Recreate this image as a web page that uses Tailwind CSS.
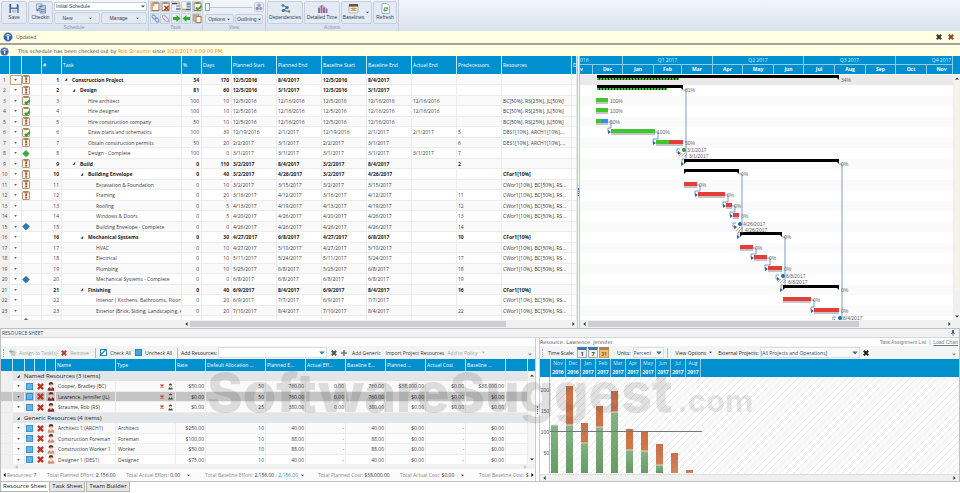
<!DOCTYPE html>
<html lang="en">
<head>
<meta charset="UTF-8">
<meta name="viewport" content="width=device-width, initial-scale=1.0">
<title>Construction Project - Schedule</title>
<script src="https://cdn.jsdelivr.net/npm/@tailwindcss/browser@4"></script>
</head>
<body class="h-screen flex flex-col overflow-hidden bg-white text-[#404040] text-[5px] leading-[8px] font-['Open_Sans',sans-serif]">

<!-- shared icons -->
<svg class="hidden">
<symbol id="i-clip" viewBox="0 0 8 9"><rect x=".5" y=".7" width="7" height="7.8" rx=".6" fill="#fbf3ea" stroke="#a98a6e" stroke-width=".9"/><rect x="1.6" y=".2" width="4.8" height="1.700" fill="#8c8a3c"/><path d="M3.100 2.600h2l-.4 2.800H3.500z" fill="#d8261c"/><circle cx="4.100" cy="6.700" r=".9" fill="#d8261c"/></symbol>
<symbol id="i-done" viewBox="0 0 8 9"><rect x=".5" y=".7" width="7" height="7.8" rx=".6" fill="#fbf7ee" stroke="#a98a6e" stroke-width=".9"/><rect x="1.600" y=".2" width="4.800" height="1.700" fill="#8c8a3c"/><path d="M2.800 6l1.600 1.500L7.700 4.200" fill="none" stroke="#2f9e2f" stroke-width="2"/></symbol>
<symbol id="i-ms-green" viewBox="0 0 8 9"><path d="M4 1.400L7.200 4.600 4 7.800.8 4.600z" fill="#35b035" stroke="#1f8f28" stroke-width=".6"/></symbol>
<symbol id="i-ms-blue" viewBox="0 0 8 9"><path d="M4 1.400L7.200 4.600 4 7.800.8 4.600z" fill="#1883c4" stroke="#34407c" stroke-width=".8"/></symbol>
<symbol id="i-info" viewBox="0 0 10 10"><circle cx="5" cy="5" r="4.300" fill="#2b5fae" stroke="#8197ba" stroke-width=".7"/><path d="M1.600 4a3.600 3 0 0 1 6.800 0q-3.400 1.600-6.800 0z" fill="#7ba4dd"/><rect x="4.300" y="4.200" width="1.500" height="3.600" fill="#fff"/><rect x="4.300" y="2" width="1.500" height="1.400" fill="#fff"/></symbol>
<symbol id="i-x" viewBox="0 0 6 6"><path d="M.8.8l4.400 4.400M5.200.8L.8 5.200" stroke="currentColor" stroke-width="2"/></symbol>
<symbol id="i-user" viewBox="0 0 8 10"><circle cx="4" cy="3" r="2.200" fill="#f0c8a4"/><path d="M1.500 3.200Q1.200 0 4 0t2.500 3.200Q5.200 1.900 1.500 3.200z" fill="#5a3526"/><path d="M.3 9.600Q.2 5.600 4 5.600t3.700 4z" fill="currentColor"/><path d="M3 5.600L4 8.400l1-2.800z" fill="#fff"/></symbol>
<symbol id="i-down" viewBox="0 0 4 3"><path d="M0 .4h4L2 2.600z" fill="currentColor"/></symbol>
<symbol id="i-left" viewBox="0 0 3 4"><path d="M2.600 0v4L.4 2z" fill="currentColor"/></symbol>
<symbol id="i-right" viewBox="0 0 3 4"><path d="M.4 0v4l2.200-2z" fill="currentColor"/></symbol>
<symbol id="i-up" viewBox="0 0 4 3"><path d="M0 2.600h4L2 .4z" fill="currentColor"/></symbol>
<symbol id="i-tree" viewBox="0 0 4 4"><path d="M3.600 0v3.600H0z" fill="currentColor"/></symbol>
</svg>

<!-- ribbon -->
<header class="flex h-[31px] shrink-0 bg-linear-to-b from-[#f3f6fb] to-[#d8e2ee] font-['Liberation_Sans',sans-serif] leading-[6px] text-[#34445c]">
<section class="flex flex-col border-r border-[#c4cedc] pl-px pr-px w-[149px]">
<div class="flex h-6 gap-px pt-px">
<button class="flex w-[26px] flex-col items-center justify-between rounded-xs border border-[#c3cfdf] bg-[#e3eaf4] pb-[3px] pt-px">
<svg class="size-3" viewBox="0 0 12 12"><path d="M1 1h9l1 1v9H1z" fill="#3f6496"/><rect x="3" y="1" width="6" height="4" fill="#eef3fa"/><rect x="2.600" y="6.400" width="7" height="4.600" fill="#dfe8f4"/><path d="M4 8h4M4 9.500h4" stroke="#7f97b8" stroke-width=".7"/></svg>
Save</button>
<button class="flex w-[25px] flex-col items-center justify-between rounded-xs border border-[#c3cfdf] bg-[#e3eaf4] pb-[3px] pt-px">
<svg class="size-3" viewBox="0 0 12 12"><rect x="1" y="1" width="6" height="7" fill="#dfe6ef" stroke="#7d8fa9" stroke-width=".8"/><rect x="5" y="3" width="6" height="8" fill="#c5d2e3" stroke="#5f7698" stroke-width=".8"/><path d="M3 4h5M6 7h4M6 9h4" stroke="#50698f" stroke-width=".8"/><path d="M2 9q0-3 3-3" fill="none" stroke="#3b78b8" stroke-width="1.200"/></svg>
Checkin</button>
<div class="flex flex-1 flex-col gap-px">
<div class="relative mt-px">
<select aria-label="Schedule" class="block h-[9px] w-full appearance-none border border-[#c3cfdf] bg-white pl-px text-[5px] leading-[7px]"><option>Initial Schedule</option></select>
<svg class="pointer-events-none absolute right-[2px] top-[3px] h-[3px] w-1"><use href="#i-down"/></svg>
</div>
<div class="flex flex-1 gap-px">
<button class="flex flex-1 items-center justify-center gap-4 rounded-xs border border-[#c3cfdf] bg-[#e3eaf4]">New <svg class="h-[3px] w-[3px]"><use href="#i-down"/></svg></button>
<button class="flex flex-1 items-center justify-center gap-2 rounded-xs border border-[#c3cfdf] bg-[#e3eaf4]">Manage <svg class="h-[3px] w-[3px]"><use href="#i-down"/></svg></button>
</div>
</div>
</div>
<p class="text-center text-[#8a9bb3]">Schedule</p>
</section>
<section class="flex w-[54px] flex-col border-r border-[#c4cedc] px-px">
<div class="grid h-6 grid-cols-5 grid-rows-2 gap-px pt-px">
<button aria-label="New task" class="grid place-items-center border border-[#c3cfdf]"><svg class="size-[9px]" viewBox="0 0 9 9"><rect x="1" y="1" width="7" height="7.500" fill="#fdf6e8" stroke="#a07c50"/><rect x="2.500" y="0" width="4" height="2" fill="#9a8f80"/><path d="M0 3l1.500-.5L2 1l.7 1.500L4 3l-1.300.7L2 5l-.6-1.300z" fill="#f08a24"/></svg></button>
<button aria-label="Delete task" class="grid place-items-center border border-[#c3cfdf]"><svg class="size-[9px]" viewBox="0 0 9 9"><rect x="1" y="1" width="7" height="7.500" fill="#fdf6e8" stroke="#a07c50"/><rect x="2.500" y="0" width="4" height="2" fill="#9a8f80"/><path d="M3.500 4l4 4M7.500 4l-4 4" stroke="#b5352a" stroke-width="1.600"/></svg></button>
<button aria-label="Outdent" class="grid place-items-center border border-[#c3cfdf]"><svg class="size-[9px]" viewBox="0 0 9 9"><path d="M0 1.500h5" stroke="#4a4a5a" stroke-width="1.500"/><path d="M5 1.500h3" stroke="#e88a3c" stroke-width="1.500"/><rect x="4" y="3" width="4.500" height="2" fill="#aab6c4"/><rect x="4" y="6" width="4.500" height="2" fill="#8292a6"/></svg></button>
<button aria-label="Indent" class="grid place-items-center border border-[#c3cfdf]"><svg class="size-[9px]" viewBox="0 0 9 9"><path d="M4.500.5h4v2.500h-4zM4.500 3.500h4v2h-4z" fill="#8292a6"/><path d="M0 7.500h4" stroke="#e88a3c" stroke-width="1.500"/><path d="M4 7.500h4.500" stroke="#4a5a78" stroke-width="1.500"/></svg></button>
<button aria-label="Complete" class="grid place-items-center border border-[#c3cfdf]"><svg class="size-[9px]" viewBox="0 0 9 9"><rect x="1" y="1" width="7" height="7.500" fill="#fdf6e8" stroke="#a07c50"/><rect x="2.500" y="0" width="4" height="2" fill="#6b8f3c"/><path d="M3 5.500l2 2L8.500 4" fill="none" stroke="#3aa336" stroke-width="1.900"/></svg></button>
<button aria-label="Link" class="grid place-items-center border border-[#c3cfdf]"><svg class="size-[9px]" viewBox="0 0 9 9" fill="none" stroke="#7b9bc8" stroke-width="1.200"><ellipse cx="3" cy="3" rx="2.300" ry="1.500" transform="rotate(45 3 3)"/><ellipse cx="6" cy="6" rx="2.300" ry="1.500" transform="rotate(45 6 6)"/></svg></button>
<button aria-label="Unlink" class="grid place-items-center border border-[#c3cfdf]"><svg class="size-[9px]" viewBox="0 0 9 9" fill="none" stroke="#b39ac8" stroke-width="1"><ellipse cx="4.500" cy="4.500" rx="4" ry="1.700" transform="rotate(45 4.500 4.500)"/></svg></button>
<button aria-label="Move right" class="grid place-items-center border border-[#c3cfdf]"><svg class="size-[9px]" viewBox="0 0 9 9"><path d="M1 3h3.500V1l4 3.500-4 3.500V6H1z" fill="#3aa336"/></svg></button>
<button aria-label="Move left" class="grid place-items-center border border-[#c3cfdf]"><svg class="size-[9px]" viewBox="0 0 9 9"><path d="M8 3H4.500V1l-4 3.500 4 3.500V6H8z" fill="#3aa336"/></svg></button>
<button aria-label="Paste" class="grid place-items-center border border-[#c3cfdf]"><svg class="size-[9px]" viewBox="0 0 9 9"><rect x=".8" y="1" width="5" height="6" fill="#e8d6b4" stroke="#a07c50"/><rect x="3" y="2.500" width="5" height="6" fill="#fdf6e8" stroke="#a07c50"/></svg></button>
</div>
<p class="text-center text-[#8a9bb3]">Task</p>
</section>
<section class="flex w-[63px] flex-col border-r border-[#c4cedc] px-[2px]">
<div class="flex h-6 flex-col gap-px pt-px">
<div class="flex h-3 items-center gap-[2px]">
<input type="range" value="0" aria-label="Zoom" class="h-[9px] w-[47px] appearance-none bg-linear-to-b from-transparent from-40% via-[#bcc6d4] via-50% to-transparent to-60% [&::-webkit-slider-thumb]:h-[8px] [&::-webkit-slider-thumb]:w-[5px] [&::-webkit-slider-thumb]:appearance-none [&::-webkit-slider-thumb]:border [&::-webkit-slider-thumb]:border-[#9aa7b8] [&::-webkit-slider-thumb]:bg-white">
<button aria-label="Find" class="rounded-xs border border-[#c3cfdf] bg-[#e3eaf4]"><svg class="size-2" viewBox="0 0 8 8"><circle cx="4" cy="2.300" r="1.800" fill="#9aa6b8"/><circle cx="2.200" cy="5.500" r="1.700" fill="#8393ac"/><circle cx="5.800" cy="5.500" r="1.700" fill="#a59ab8"/></svg></button>
</div>
<div class="flex flex-1 gap-px">
<button class="flex flex-1 items-center justify-center gap-[2px] rounded-xs border border-[#c3cfdf] bg-[#e3eaf4]">Options <svg class="h-[3px] w-[3px]"><use href="#i-down"/></svg></button>
<button class="flex flex-1 items-center justify-center gap-px rounded-xs border border-[#c3cfdf] bg-[#e3eaf4]">Outlining <svg class="h-[3px] w-[3px]"><use href="#i-down"/></svg></button>
</div>
</div>
<p class="text-center text-[#8a9bb3]">View</p>
</section>
<section class="flex w-[133px] flex-col border-r border-[#c4cedc] px-px">
<div class="flex h-6 gap-px pt-px">
<button class="flex w-9 flex-col items-center justify-between rounded-xs border border-[#c3cfdf] bg-[#e3eaf4] pb-[3px] pt-px">
<svg class="size-[11px]" viewBox="0 0 11 11"><circle cx="3" cy="2.500" r="1.400" fill="#5a9a3e"/><path d="M3.500 2.500L7 4.500 3.500 7.500 9 8.500" fill="none" stroke="#2f66a6" stroke-width="1"/><circle cx="7.200" cy="4.400" r="1.500" fill="#3d6fae"/><circle cx="3.200" cy="7.500" r="1.500" fill="#3d6fae"/><circle cx="9" cy="8.500" r="1.300" fill="#5a9a3e"/></svg>
Dependencies</button>
<button class="flex w-9 flex-col items-center justify-between rounded-xs border border-[#c3cfdf] bg-[#e3eaf4] pb-[3px] pt-px">
<svg class="size-[11px]" viewBox="0 0 11 11"><path d="M1 5h2v5H1z" fill="#8a6cb8"/><path d="M3.500 3h2v7h-2z" fill="#c85a7c"/><path d="M6 4.500h2V10H6z" fill="#4d86c0"/><path d="M8.500 6h2v4h-2z" fill="#b05ab0"/><path d="M1 5l4-3 5 4" fill="none" stroke="#7f6a9c" stroke-width=".7"/></svg>
Detailed Time</button>
<button class="relative flex w-[31px] flex-col items-center justify-between rounded-xs border border-[#c3cfdf] bg-[#e3eaf4] pb-[3px] pr-[6px] pt-px">
<svg class="size-[11px]" viewBox="0 0 11 11"><rect x="1" y="1.500" width="9" height="8.500" rx="1" fill="#f2efe8" stroke="#9a958c" stroke-width=".6"/><rect x="1" y="1" width="9" height="2.600" fill="#5c5750"/><path d="M2.500 5.500h6M2.500 7.500h6" stroke="#b3a488" stroke-width="1"/><rect x="4" y="4.700" width="3" height="2" fill="#e08c3a"/></svg>
Baselines<svg class="absolute right-[2px] top-[9px] h-[3px] w-[3px]"><use href="#i-down"/></svg></button>
<button class="flex w-6 flex-col items-center justify-between rounded-xs border border-[#c3cfdf] bg-[#e3eaf4] pb-[3px] pt-px">
<svg class="size-[11px]" viewBox="0 0 11 11"><path d="M2 .5h5l2.500 2.500v7.500H2z" fill="#fff" stroke="#8a96a8" stroke-width=".7"/><path d="M3.500 5.500q1-2 3.500-1l.3-1 .9 2.400-2.300.3.500-.8q-1.400-.4-2 .6zM8 6.700q-1 2.300-3.500 1.300l-.4 1-.8-2.500 2.300-.2-.4.800q1.300.5 1.900-.6z" fill="#3f9c3c"/></svg>
Refresh</button>
</div>
<p class="text-center text-[#8a9bb3]">Actions</p>
</section>
</header>

<div class="flex h-[14px] shrink-0 items-center gap-[3px] border-b-2 border-[#a3a3a3] bg-[#ffffe1] px-[3px]">
<svg class="size-[10px]"><use href="#i-info"/></svg>
<p class="flex-1 text-[#3d4c5c]">Updated</p>
<button aria-label="Close" class="text-[#333]"><svg class="size-[6px]"><use href="#i-x"/></svg></button>
<button aria-label="Dismiss" class="ml-[3px] mr-[3px] text-[#8b4a2c]"><svg class="size-[6px]"><use href="#i-x"/></svg></button>
</div>
<div class="flex h-[11px] shrink-0 items-center gap-[9px] border-t border-white bg-[#ffffe1]">
<svg class="size-[9px]"><use href="#i-info"/></svg>
<p class="font-['DejaVu_Sans',sans-serif] text-[#3d4c5c]">This schedule has been checked out by <span class="text-[#ee8434]">Rob Straume</span> since <span class="text-[#ee8434]">3/28/2017 4:09:00 PM.</span></p>
</div>

<main class="flex min-h-0 flex-1 flex-col">
<!-- schedule grid + gantt -->
<section class="grid min-h-0 flex-[272_0_0px] grid-cols-[577fr_3px_380fr]">
<div class="flex min-h-0 min-w-0 flex-col">
<div class="min-h-0 flex-1 overflow-hidden">
<table class="w-full table-fixed border-separate border-spacing-0">
<colgroup>
<col class="w-[10px]"><col class="w-3"><col class="w-5"><col class="w-5"><col class="w-[120px]"><col class="w-5"><col class="w-[30px]"><col class="w-[45px]"><col class="w-[45px]"><col class="w-[45px]"><col class="w-[45px]"><col class="w-[45px]"><col class="w-[45px]"><col class="w-[70px]"><col>
</colgroup>
<thead>
<tr id="grid-head" class="h-[19px] bg-[#0090cf] text-left text-white"></tr>
</thead>
<tbody id="grid-body"></tbody>
</table>
</div>
<div class="flex h-2 shrink-0 items-center bg-[#f0f0f0] pl-[185px] pr-[2px] text-[#333]">
<svg class="mr-[2px] h-1 w-[3px]"><use href="#i-left"/></svg>
<div class="h-[6px] w-[316px] bg-[#cdcdd2]"></div>
<svg class="ml-auto h-1 w-[3px]"><use href="#i-right"/></svg>
</div>
</div>
<div class="flex items-center justify-center border-x border-[#b9c4d6] bg-white"><div class="h-2 w-px border-l border-dotted border-[#3f5f95]"></div></div>
<div class="flex min-h-0 min-w-0 flex-col">
<div class="flex h-[18px] shrink-0 bg-[#0090cf] text-center text-[#d5edf8]">
<div class="min-w-0 flex-1 overflow-hidden border-r border-[#8fcbe8]">
<div id="quarters" class="flex h-[9px] border-b border-[#8fcbe8]"></div>
<div id="months" class="flex h-[9px] font-bold text-white"></div>
</div>
<div class="w-[7px]"></div>
</div>
<div class="flex min-h-0 flex-1 border-t border-white">
<div class="min-w-0 flex-1 overflow-hidden"><svg id="gantt" class="block h-full w-full font-['Liberation_Sans',sans-serif] text-[5px]" fill="#666"></svg></div>
<div class="flex w-[7px] flex-col items-center justify-between bg-[#f0f0f0] py-[2px] text-[#333]">
<svg class="h-[3px] w-1"><use href="#i-up"/></svg>
<div class="mb-6 w-1 flex-1 bg-[#f6f3ea]"></div>
<svg class="h-[3px] w-1"><use href="#i-down"/></svg>
</div>
</div>
<div class="flex h-2 shrink-0 items-center bg-[#f0f0f0] pl-[3px] pr-[9px] text-[#333]">
<svg class="mr-[2px] h-1 w-[3px]"><use href="#i-left"/></svg>
<div class="h-[6px] w-[271px] bg-[#cdcdd2]"></div>
<svg class="ml-auto h-1 w-[3px]"><use href="#i-right"/></svg>
</div>
</div>
</section>

<!-- resource sheet -->
<section class="relative flex min-h-0 flex-[165_0_0px] flex-col">
<div class="flex min-h-0 flex-1 flex-col border border-[#c0c0c0]">
<div class="flex h-[9px] shrink-0 items-center justify-between border-b border-[#d8d8d8] bg-[#f1f2f3] px-px pr-[3px]">
<h2 class="text-[#3c5068]">RESOURCE SHEET</h2>
<svg class="size-[6px]" viewBox="0 0 6 6"><path d="M2 0h2v3h1v.8H1V3h1zM2.700 4h.7v2h-.7z" fill="#55657c"/></svg>
</div>
<div class="grid min-h-0 flex-1 grid-cols-[534fr_5px_419fr]">
<div class="flex min-h-0 min-w-0 flex-col pt-2">
<div class="flex h-[13px] shrink-0 items-center gap-[3px] whitespace-nowrap bg-[#f3f5f5] pl-[2px] text-[#333]">
<span class="h-2 border-l border-dotted border-[#aaa]"></span>
<button class="flex items-center gap-[3px] text-[#a3a3a3]"><svg class="ml-[2px] size-[7px]" viewBox="0 0 7 7"><rect x="2" y="1.500" width="4.500" height="5.500" fill="#ccc"/><path d="M0 2h1.500V.5h1V2H4v1H2.500v1.500h-1V3H0z" fill="#7fb77f"/></svg>Assign to Task(s)</button>
<button class="ml-px flex items-center gap-[3px] text-[#a3a3a3]"><svg class="size-[6px] text-[#c23a2e]"><use href="#i-x"/></svg>Remove</button>
<span class="ml-[3px] h-[10px] border-l border-[#bbb]"></span>
<label class="ml-px flex items-center gap-[3px]"><input type="checkbox" checked class="size-[7px] appearance-none border border-[#2f7fb8] bg-[#6db3e3] checked:bg-[linear-gradient(135deg,#fff_30%,#3f97d2_30%,#3f97d2_50%,#fff_50%)]">Check All</label>
<label class="ml-px flex items-center gap-[3px]"><input type="checkbox" class="size-[7px] appearance-none border border-[#2f7fb8] bg-[#4ba3dd]">Uncheck All</label>
<span class="ml-[2px] h-[10px] border-l border-[#bbb]"></span>
<label for="add-res" class="font-medium text-[#222]">Add Resources:</label>
<div class="relative -ml-[2px]">
<select id="add-res" class="block h-[11px] w-[109px] appearance-none border border-[#ddd] bg-white"><option></option></select>
<svg class="pointer-events-none absolute right-[2px] top-1 h-[4px] w-[6px] text-[#0f80c0]"><use href="#i-down"/></svg>
</div>
<button aria-label="Clear" class="ml-px text-[#555]"><svg class="size-[6px]"><use href="#i-x"/></svg></button>
<button class="ml-px flex items-center gap-[5px]"><svg class="size-[6px]" viewBox="0 0 6 6"><path d="M2.200 0h1.600v2.200H6v1.600H3.800V6H2.200V3.800H0V2.200h2.200z" fill="#777"/></svg>Add Generic</button>
<button class="ml-[2px]">Import Project Resources</button>
<button class="flex items-center gap-1 text-[#a3a3a3]">Add to Policy <svg class="h-[3px] w-[3px]"><use href="#i-down"/></svg></button>
<svg class="ml-auto mr-[3px] mt-1 h-[3px] w-1 text-[#888]"><use href="#i-down"/></svg>
</div>
<div class="flex min-h-0 flex-1">
<div class="min-w-0 flex-1 overflow-hidden">
<table class="w-full table-fixed border-separate border-spacing-0">
<colgroup>
<col class="w-3"><col class="w-3"><col class="w-[10px]"><col class="w-[11px]"><col class="w-[10px]"><col class="w-[60px]"><col class="w-[60px]"><col class="w-[30px]"><col class="w-[60px]"><col class="w-10"><col class="w-10"><col class="w-10"><col class="w-10"><col class="w-10"><col class="w-10"><col>
</colgroup>
<thead><tr id="res-head" class="h-3 bg-[#0090cf] text-left text-white"></tr></thead>
<tbody id="res-body"></tbody>
</table>
</div>
<div class="flex w-[7px] flex-col">
<div class="h-3 bg-[#0090cf]"></div>
<div class="flex flex-1 flex-col items-center justify-between bg-[#f5f5f2] py-[3px] text-[#333]"><svg class="h-[3px] w-1"><use href="#i-up"/></svg><svg class="h-[3px] w-1"><use href="#i-down"/></svg></div>
</div>
</div>
<div class="flex h-[5px] shrink-0 items-center justify-between bg-[#f0f0f0] pl-[14px] pr-2 text-[#bbb]"><svg class="h-1 w-[3px]"><use href="#i-left"/></svg><svg class="h-1 w-[3px]"><use href="#i-right"/></svg></div>
<div class="flex h-3 shrink-0 items-center overflow-hidden whitespace-nowrap bg-[#fbfbfb] pl-[2px] text-[#888]">
<svg class="mr-px h-1 w-[3px] text-black"><use href="#i-left"/></svg>
<p class="w-10">Resources: <span class="text-[#444]">7</span></p>
<p class="w-[79px]">Total Planned Effort: <span class="text-[#333]">2,156.00</span></p>
<p class="flex w-[79px] items-center gap-[3px]"><span>Total Actual Effort: <span class="text-[#333]">0.00</span></span> <svg class="ml-1 h-[3px] w-[3px] text-black"><use href="#i-down"/></svg></p>
<p class="flex w-[113px] items-center gap-[3px]"><span>Total Baseline Effort: <span class="text-[#333]">2,156.00</span> ‹ <span class="text-[#2a8cc4]">2,156.00</span></span> <svg class="h-[3px] w-[3px] text-black"><use href="#i-down"/></svg></p>
<p class="w-[82px]">Total Planned Cost: <span class="text-[#333]">$38,000.00</span></p>
<p class="flex w-[79px] items-center gap-[3px]"><span>Total Actual Cost: <span class="text-[#333]">$0.00</span></span> <svg class="ml-1 h-[3px] w-[3px] text-black"><use href="#i-down"/></svg></p>
<p class="flex-1 overflow-hidden">Total Baseline Cost: <span class="text-[#333]">$</span></p>
<svg class="mx-px h-1 w-[3px] text-black"><use href="#i-right"/></svg>
</div>
</div>
<div class="flex items-center justify-center border-x border-[#c5cddb] bg-white"><div class="h-2 border-l border-dotted border-[#3f5f95]"></div></div>
<div class="flex min-h-0 min-w-0 flex-col">
<div class="flex h-2 shrink-0 items-center justify-between pr-px font-['Liberation_Sans',sans-serif] text-[#777]">
<h3 class="font-['DejaVu_Sans',sans-serif] text-[#555]">Resource: Lawrence, Jennifer</h3>
<p><a href="#">Task Assignment List</a> &nbsp;|&nbsp; <a href="#" class="underline">Load Chart</a></p>
</div>
<div class="flex h-[13px] shrink-0 items-center gap-[3px] whitespace-nowrap bg-[#f3f5f5] pl-[2px] text-[#222]">
<span class="h-2 border-l border-dotted border-[#aaa]"></span>
<span class="ml-[2px]">Time Scale:</span>
<div class="flex gap-px font-bold leading-[6px]">
<button class="h-[11px] w-[10px] border border-[#aaa] border-t-[3px] border-t-[#3f74a8] bg-[#eee]">1</button>
<button class="h-[11px] w-[10px] border border-[#aaa] border-t-[3px] border-t-[#3f74a8] bg-[#eee]">7</button>
<button class="h-[11px] w-[10px] border border-[#d39543] border-t-[3px] border-t-[#a8835c] bg-[#f8bf72] text-[#8a5a20]">31</button>
</div>
<label for="units" class="ml-[5px]">Units:</label>
<div class="relative -ml-px">
<select id="units" class="block h-[11px] w-[31px] appearance-none border border-[#ddd] bg-[#f8f9f9] text-[#2d4a73]"><option>Percent</option></select>
<svg class="pointer-events-none absolute right-[2px] top-1 h-[4px] w-[6px] text-[#2f6ea8]"><use href="#i-down"/></svg>
</div>
<span class="h-[10px] border-l border-[#bbb]"></span>
<button class="ml-[5px] flex items-center gap-[3px]">View Options <svg class="h-[3px] w-[3px]"><use href="#i-down"/></svg></button>
<label for="ext" class="ml-[3px]">External Projects:</label>
<div class="relative -ml-[2px]">
<select id="ext" class="block h-[11px] w-[100px] appearance-none border border-[#ddd] bg-[#f8f9f9] text-[#2d4a73]"><option>[All Projects and Operations]</option></select>
<svg class="pointer-events-none absolute right-[2px] top-1 h-[4px] w-[6px] text-[#2f6ea8]"><use href="#i-down"/></svg>
</div>
<button aria-label="Clear projects" class="text-[#222]"><svg class="size-[6px]"><use href="#i-x"/></svg></button>
<svg class="ml-auto mr-[3px] mt-1 h-[3px] w-1 text-[#888]"><use href="#i-down"/></svg>
</div>
<div id="load-head" class="flex h-[18px] shrink-0 bg-[#0090cf] pl-[10px] text-center leading-[9px] text-[#d5edf8]"></div>
<div class="min-h-0 flex-1 overflow-hidden"><svg id="load" class="block h-full w-full font-['Liberation_Sans',sans-serif] text-[5px]" fill="#555"></svg></div>
<div class="flex h-[7px] shrink-0 items-center justify-between border-t border-[#ddd] bg-[#f0f0f0] px-[3px] text-[#333]"><svg class="h-1 w-[3px]"><use href="#i-left"/></svg><svg class="h-1 w-[3px]"><use href="#i-right"/></svg></div>
</div>
</div>
</div>
<nav class="flex h-[11px] shrink-0 items-start gap-px bg-white text-[6px] leading-[9px] text-[#222]">
<button class="border-b border-l border-[#b5b5b5] bg-white px-[2px]">Resource Sheet</button>
<button class="border border-t-0 border-[#b5b5b5] bg-[#e6e6e6] px-[2px]">Task Sheet</button>
<button class="border border-t-0 border-[#b5b5b5] bg-[#e6e6e6] px-[2px]">Team Builder</button>
</nav>
<p class="pointer-events-none absolute left-[207px] top-[33px] flex items-baseline gap-[5px] whitespace-nowrap font-['Inter',sans-serif] text-[54px] font-extrabold leading-[64px] text-[#555]/18">SoftwareSuggest<span class="text-[31px] font-bold">.com</span></p>
</section>
</main>

<script>
const $ = (id) => document.getElementById(id);

// status icon, outline depth, name, %, days, start, end, actual end, predecessors, resources, summary
const tasks = [
    ['clip', 0, 'Construction Project', 34, 170, '12/5/2016', '8/4/2017', '', '', '', 1],
    ['clip', 1, 'Design', 81, 60, '12/5/2016', '3/1/2017', '', '', '', 1],
    ['done', 2, 'Hire architect', 100, 10, '12/5/2016', '12/16/2016', '12/16/2016', '', 'BC[50%], RS[25%], JL[50%]'],
    ['done', 2, 'Hire designer', 100, 10, '12/5/2016', '12/16/2016', '12/16/2016', '', 'BC[50%], RS[25%], JL[50%]'],
    ['clip', 2, 'Hire construction company', 50, 10, '12/5/2016', '12/16/2016', '', '', 'BC[50%], RS[25%], JL[50%]'],
    ['done', 2, 'Draw plans and schematics', 100, 30, '12/19/2016', '2/1/2017', '2/1/2017', '5', 'DES1[10%], ARCH1[10%],...'],
    ['clip', 2, 'Obtain construction permits', 50, 20, '2/2/2017', '3/1/2017', '', '6', 'DES1[10%], ARCH1[10%],...'],
    ['ms-green', 2, 'Design - Complete', 100, 0, '3/1/2017', '3/1/2017', '3/1/2017', '7', ''],
    ['clip', 1, 'Build', 0, 110, '3/2/2017', '8/4/2017', '', '2', '', 1],
    ['clip', 2, 'Building Envelope', 0, 40, '3/2/2017', '4/26/2017', '', '', 'CFor1[10%]', 1],
    ['clip', 3, 'Excavation & Foundation', 0, 10, '3/2/2017', '3/15/2017', '', '', 'CWor1[10%], BC[50%], RS...'],
    ['clip', 3, 'Framing', 0, 20, '3/16/2017', '4/12/2017', '', '11', 'CWor1[10%], BC[50%], RS...'],
    ['', 3, 'Roofing', 0, 5, '4/13/2017', '4/19/2017', '', '12', 'CWor1[10%], BC[50%], RS...'],
    ['', 3, 'Windows & Doors', 0, 5, '4/20/2017', '4/26/2017', '', '13', 'CWor1[10%], BC[50%], RS...'],
    ['ms-blue', 3, 'Building Envelope - Complete', 0, 0, '4/26/2017', '4/26/2017', '', '14', ''],
    ['', 2, 'Mechanical Systems', 0, 30, '4/27/2017', '6/8/2017', '', '10', 'CFor1[10%]', 1],
    ['', 3, 'HVAC', 0, 10, '4/27/2017', '5/10/2017', '', '', 'CWor1[10%], BC[50%], RS...'],
    ['', 3, 'Electrical', 0, 10, '5/11/2017', '5/24/2017', '', '17', 'CWor1[10%], BC[50%], RS...'],
    ['', 3, 'Plumbing', 0, 10, '5/25/2017', '6/8/2017', '', '18', 'CWor1[10%], BC[50%], RS...'],
    ['ms-blue', 3, 'Mechanical Systems - Complete', 0, 0, '6/8/2017', '6/8/2017', '', '19', ''],
    ['', 2, 'Finishing', 0, 40, '6/9/2017', '8/4/2017', '', '16', 'CFor1[10%]', 1],
    ['', 3, 'Interior ( Kitchens, Bathrooms, Floors )', 0, 20, '6/9/2017', '7/7/2017', '', '', 'CWor1[10%], BC[50%], RS...'],
    ['', 3, 'Exterior (Brick, Siding, Landscaping, etc)', 0, 20, '7/10/2017', '8/4/2017', '', '22', 'CWor1[10%], BC[50%], RS...'],
    ['ms-blue', 3, '', '', '', '', '', '', '', '']
];
const indents = ['pl-[2px]', 'pl-[10px]', 'pl-[18px]', 'pl-[26px]'];
const cell = 'overflow-hidden whitespace-nowrap border-b border-r border-[#ececec] p-0 ';

$('grid-head').innerHTML = ['', '', '', '#', 'Task', '%', 'Days', 'Planned Start', 'Planned End', 'Baseline Start', 'Baseline End', 'Actual End', 'Predecessors', 'Resources', 'D']
    .map(t => `<th class="overflow-hidden whitespace-nowrap border-b border-r border-b-white border-r-[#c3e4f3] p-0 pl-px font-medium">${t}</th>`).join('');

$('grid-body').innerHTML = tasks.map((t, i) => {
    const [icon, lvl, name, pct, days, start, end, actual, pred, res, bold] = t;
    const no = name ? i + 1 : '';
    const text = [start, end, start, end, actual, pred, res, ''].map(v => `<td class="${cell}pl-px">${v}</td>`).join('');
    return `<tr class="odd:h-[10px] even:h-[11px] odd:bg-[#fafafa] ${bold ? 'font-bold text-[#222]' : ''}">
<td class="${cell}bg-[#f0f0f0] text-center font-normal text-[#444]">${no}</td>
<td class="${cell}${i ? '' : 'outline outline-[#c8a468] -outline-offset-1'}"><svg class="mx-auto h-[2px] w-[3px] text-[#333]"><use href="#i-down"/></svg></td>
<td class="${cell}"><svg class="h-[9px] w-2">${icon ? `<use href="#i-${icon}"/>` : ''}</svg></td>
<td class="${cell}pr-[2px] text-right">${no}</td>
<td class="${cell}"><div class="flex items-center gap-1 ${indents[lvl]}"><svg class="h-[3px] w-1 shrink-0 text-[#333]">${bold ? '<use href="#i-tree"/>' : ''}</svg>${name}</div></td>
<td class="${cell}pr-[2px] text-right">${pct}</td>
<td class="${cell}pr-[2px] text-right">${days}</td>${text}</tr>`;
}).join('');

$('quarters').innerHTML = [['w-[43px] text-left', '016'], ['w-[90px]', 'Q1 2017'], ['w-[91px]', 'Q2 2017'], ['w-[92px]', 'Q3 2017'], ['w-[92px]', 'Q4 2017']]
    .map(([c, t]) => `<div class="${c} shrink-0 border-r border-[#8fcbe8]">${t}</div>`).join('');
$('months').innerHTML = [['w-[13px] text-left', 'v'], ['w-[30px]', 'Dec'], ['w-[31px]', 'Jan'], ['w-[28px]', 'Feb'], ['w-[31px]', 'Mar'], ['w-[30px]', 'Apr'], ['w-[31px]', 'May'], ['w-[30px]', 'Jun'], ['w-[31px]', 'Jul'], ['w-[31px]', 'Aug'], ['w-[30px]', 'Sep'], ['w-[31px]', 'Oct'], ['w-[30px]', 'Nov']]
    .map(([c, t]) => `<div class="${c} shrink-0 border-r border-[#8fcbe8]">${t}</div>`).join('');

// gantt: s = summary, b = bar, m = milestone; x positions along the timeline
const top0 = (row) => Math.floor((row - 1) * 10.5);
const bars = [
    ['s', 17, 259, 82, '34%'], ['s', 17, 103, 70, '81%'], ['b', 16, 28, 12, '100%'], ['b', 16, 28, 12, '100%'], ['b', 16, 28, 5, '50%', '#3093f0'],
    ['b', 31, 75, 44, '100%'], ['b', 76, 103, 13, '50%'], ['m', 103, 0, '#2f9e2f', '3/1/2017'], ['s', 104, 259, 0, '0%'], ['s', 104, 159, 0, '0%'],
    ['b', 104, 117, 0, '0%'], ['b', 118, 145, 0, '0%'], ['b', 146, 152, 0, '0%'], ['b', 153, 159, 0, '0%'], ['m', 159, 0, '#156fa5', '4/26/2017'],
    ['s', 160, 202, 0, '0%'], ['b', 160, 173, 0, '0%'], ['b', 174, 187, 0, '0%'], ['b', 188, 202, 0, '0%'], ['m', 202, 0, '#156fa5', '6/8/2017'],
    ['s', 203, 259, 0, '0%'], ['b', 203, 231, 0, '0%'], ['b', 234, 259, 0, '0%'], ['m', 259, 0, '#156fa5', '8/4/2017']
];
let g = '<defs><pattern id="hatch" width="3" height="3" patternUnits="userSpaceOnUse"><path d="M0 3L3 0" stroke="#c9755f" stroke-width=".7"/></pattern></defs>';
bars.forEach((b, i) => {
    const y = top0(i + 1);
    if (i % 2 === 0) g += `<rect y="${y}" width="100%" height="10" fill="${i ? '#fafafa' : '#ebe9e9'}"/>`;
});
const link = (x1, y1, x2, y2) => `<path d="M${x1} ${y1}h3v${y2 - y1 - 4}H${x2 - 3}V${y2}h2" fill="none" stroke="#5b83b8" stroke-width=".8"/><path d="M${x2 - 3} ${y2 - 2}l3 2-3 2z" fill="#38649f"/>`;
bars.forEach(([kind, x1, x2, done, label, rest], i) => {
    const y = top0(i + 1);
    if (kind === 's') {
        g += `<path d="M${x1} ${y}H${x2}v5l-2-2H${x1 + 2}l-2 2z" fill="#000"/>`;
        if (done) g += `<path d="M${x1} ${y + 4}h${done}" stroke="#222" stroke-width="2"/><path d="M${x1} ${y + 4}h${done}" stroke="#43c335" stroke-width="2" stroke-dasharray="2 1"/>`;
        g += `<text x="${x2 + 2}" y="${y + 7}">${label}</text>`;
    } else if (kind === 'b') {
        g += `<rect x="${x1}" y="${y + 4}" width="${x2 - x1}" height="4" fill="#c4c4c4"/><rect x="${x1}" y="${y + 2}" width="${x2 - x1}" height="4" fill="${rest || '#e53e3a'}"/>`;
        g += `<rect x="${x1}" y="${y + 2}" width="${done}" height="4" fill="#3fc62f"/><text x="${x2 + 2}" y="${y + 7}">${label}</text>`;
    } else {
        g += `<path d="M${x1 - 3} ${y + 1}h-3v4h2" fill="none" stroke="#5b83b8" stroke-width=".8"/><path d="M${x1 - 5} ${y + 3}l3 2-3 2z" fill="#38649f"/>`;
        g += `<circle cx="${x1 + 1}" cy="${y + 2}" r="2" fill="${done}"/><text x="${x1 + 4}" y="${y + 4}">${label}</text>`;
        g += `<rect x="${x1 - 4}" y="${y + 5}" width="8" height="4" fill="url(#hatch)"/>`;
        if (i < 23) g += `<text x="${x1 + 6}" y="${y + 10}">${label}</text>`;
    }
});
[[5, 6], [6, 7], [11, 12], [12, 13], [13, 14], [17, 18], [18, 19], [22, 23]].forEach(([a, b]) => {
    g += link(bars[a - 1][2], top0(a) + 5, bars[b - 1][1], top0(b) + 5);
});
[[106, 15, 84], [162, 99, 158], [205, 162, 210], [262, 89, 246]].forEach(([x, y1, y2]) => {
    g += `<path d="M${x - 3} ${y1}h3V${y2}" fill="none" stroke="#5b83b8" stroke-width=".8"/>`;
});
[[104, 9], [160, 16], [203, 21]].forEach(([x, r]) => {
    g += `<path d="M${x} ${top0(r)}h-2v5" fill="none" stroke="#5b83b8" stroke-width=".8"/><path d="M${x - 3} ${top0(r) + 3}l3 2-3 2z" fill="#38649f"/>`;
});
$('gantt').innerHTML = g;

// resource sheet
const resources = [
    { group: 'Named Resources (3 items)' },
    ['Cooper, Bradley (BC)', '', '$50.00', '50', '760.00', '0.00', '760.00', '$38,000.00', '$0.00', '$38,000.00'],
    ['Lawrence, Jennifer (JL)', '', '$0.00', '50', '760.00', '0.00', '760.00', '$0.00', '$0.00', '$0.00'],
    ['Straume, Rob (RS)', '', '$0.00', '25', '380.00', '0.00', '380.00', '$0.00', '$0.00', '$0.00'],
    { group: 'Generic Resources (4 items)' },
    ['Architect 1 (ARCH1)', 'Architect', '$250.00', '10', '40.00', '-', '40.00', '$0.00', '-', '$0.00'],
    ['Construction Foreman', 'Foreman', '$100.00', '10', '88.00', '-', '88.00', '$0.00', '-', '$0.00'],
    ['Construction Worker 1', 'Worker', '$50.00', '10', '88.00', '-', '88.00', '$0.00', '-', '$0.00'],
    ['Designer 1 (DES1)', 'Designer', '$75.00', '10', '40.00', '-', '40.00', '$0.00', '-', '$0.00']
];
$('res-head').innerHTML = ['', '', '', '', '', 'Name', 'Type', 'Rate', 'Default Allocation ...', 'Planned E...', 'Actual Eff...', 'Baseline E...', 'Planned ...', 'Actual Cost', 'Baseline ...', '']
    .map(t => `<th class="overflow-hidden whitespace-nowrap border-r border-[#c3e4f3] p-0 pl-px font-medium">${t}</th>`).join('');
$('res-body').innerHTML = resources.map((r, i) => {
    if (r.group) return `<tr class="h-[10px] bg-[#e3e6e9] text-[6px] text-[#222]"><td class="bg-[#f0f0f0] p-0"></td><td colspan="15" class="p-0"><div class="flex items-center gap-1 pl-1"><svg class="size-[3px]"><use href="#i-tree"/></svg>${r.group}</div></td></tr>`;
    const sel = i === 2;
    const [name, type, ...nums] = r;
    return `<tr class="odd:h-[10px] even:h-[11px] ${sel ? 'bg-[#c4c4c4] text-[#222]' : 'even:bg-[#fafafa]'}">
<td class="${cell}${sel ? '' : 'bg-[#f0f0f0]'}"></td>
<td class="${cell}"><svg class="mx-auto h-[2px] w-[3px] text-[#333]"><use href="#i-down"/></svg></td>
<td class="${cell}"><input type="checkbox" aria-label="${name}" class="mx-auto block size-[7px] appearance-none border border-[#3f8fc8] bg-[#63b4e8]"></td>
<td class="${cell}"><svg class="mx-auto size-[7px] text-[#b8352a]"><use href="#i-x"/></svg></td>
<td class="${cell}"><svg class="mx-auto h-[9px] w-2 ${i < 4 ? 'text-[#7a2f2a]' : 'text-[#d0907c]'}"><use href="#i-user"/></svg></td>
<td class="${cell}pl-[2px]">${name}</td>
<td class="${cell}pl-[2px]">${type || '<div class="flex items-center justify-end gap-1 pr-[2px]"><svg class="size-1 text-[#d8382e]" viewBox="0 0 6 6"><use href="#i-x"/></svg><svg class="h-[7px] w-[5px] text-[#3c4a44]"><use href="#i-user"/></svg></div>'}</td>
${nums.map(n => `<td class="${cell}pr-px text-right">${n}</td>`).join('')}<td class="${cell}"></td></tr>`;
}).join('');

// load chart: [month, year, total height, allocated height]
const load = [['Nov', 2016, 48, 48], ['Dec', 2016, 87, 48], ['Jan', 2017, 50, 30], ['Feb', 2017, 67, 46], ['Mar', 2017, 82, 61], ['Apr', 2017, 44, 23], ['May', 2017, 42, 22], ['Jun', 2017, 29, 8], ['Jul', 2017, 20, 0], ['Aug', 2017, 3, 0]];
$('load-head').innerHTML = load.map(([m, y]) => `<div class="w-[15px] border-l border-[#8fcbe8]">${m}<br><b class="text-white">${y}</b></div>`).join('') + '<div class="border-l border-[#8fcbe8]"></div>';
const base = 96;
let c = '<defs><pattern id="lines" width="7" height="7" patternUnits="userSpaceOnUse"><path d="M0 7L7 0" stroke="#e2e2e2" stroke-width=".8"/></pattern>'
    + '<linearGradient id="grn" x2="0" y2="1"><stop stop-color="#84b484"/><stop offset="1" stop-color="#669a66"/></linearGradient>'
    + '<linearGradient id="org" x2="0" y2="1"><stop stop-color="#c96f45"/><stop offset="1" stop-color="#d5855c"/></linearGradient></defs>'
    + '<rect x="10" width="100%" height="100%" fill="url(#lines)"/><path d="M9.500 0V96" stroke="#bbb"/>';
[[200, 15], [150, 36], [100, 57], [50, 78]].forEach(([v, y]) => {
    c += `<text x="9" y="${y}" text-anchor="end">${v}</text>`;
});
load.forEach(([, , total, used], i) => {
    const x = 11 + i * 15;
    c += `<rect x="${x}" y="${base - total}" width="7" height="${total}" fill="url(#org)"/>`;
    if (used) c += `<rect x="${x}" y="${base - used}" width="7" height="${used}" fill="url(#grn)"/><path d="M${x} ${base - used}h7" stroke="#e8d8cc"/>`;
});
c += '<path d="M10 54.500h152" stroke="#777"/>';
$('load').innerHTML = c;
</script>
</body>
</html>
